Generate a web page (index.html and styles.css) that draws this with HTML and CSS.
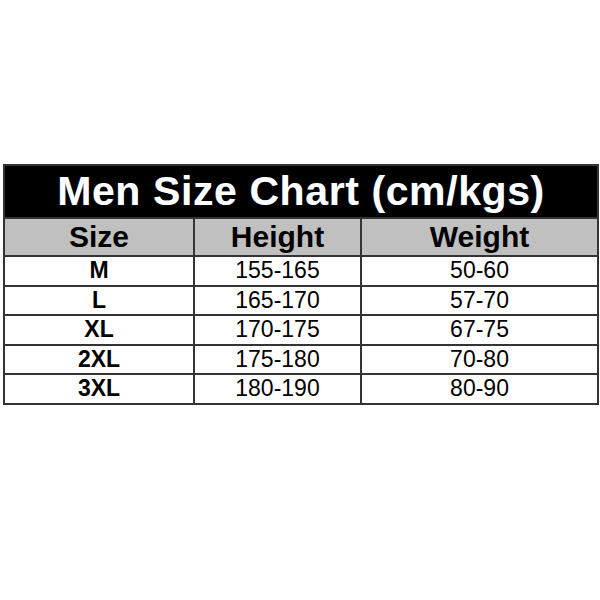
FILE: index.html
```html
<!DOCTYPE html>
<html>
<head>
<meta charset="utf-8">
<link rel="stylesheet" href="styles.css">
</head>
<body>
<div class="page">
  <table class="chart">
    <colgroup>
      <col class="c1"><col class="c2"><col class="c3">
    </colgroup>
    <thead>
      <tr class="title-row"><th colspan="3">Men Size Chart (cm/kgs)</th></tr>
      <tr class="head-row"><th>Size</th><th>Height</th><th>Weight</th></tr>
    </thead>
    <tbody>
      <tr><td class="sz">M</td><td>155-165</td><td>50-60</td></tr>
      <tr><td class="sz">L</td><td>165-170</td><td>57-70</td></tr>
      <tr><td class="sz">XL</td><td>170-175</td><td>67-75</td></tr>
      <tr><td class="sz">2XL</td><td>175-180</td><td>70-80</td></tr>
      <tr><td class="sz">3XL</td><td>180-190</td><td>80-90</td></tr>
    </tbody>
  </table>
</div>
</body>
</html>
```
FILE: styles.css
```css
html, body {
  margin: 0;
  padding: 0;
  background: #ffffff;
}
body {
  width: 600px;
  height: 600px;
  font-family: "Liberation Sans", Arial, sans-serif;
}
.page {
  padding: 164px 3px 0 3px;
}
.chart {
  width: 594px;
  border-collapse: collapse;
  table-layout: fixed;
  border: 2px solid #2e2e2e;
}
.c1 { width: 190px; }
.c2 { width: 167px; }
.c3 { width: 237px; }
.chart th, .chart td {
  border: 2px solid #333333;
  padding: 0;
  text-align: center;
  vertical-align: middle;
  color: #000000;
}
.title-row th {
  background: #000000;
  color: #ffffff;
  height: 51px;
  font-size: 41px;
  font-weight: bold;
  letter-spacing: 0.6px;
  text-shadow: 0 0 1px #1c3a66;
}
.head-row th {
  background: #c0c0c0;
  height: 36px;
  font-size: 30px;
  font-weight: bold;
}
.chart td {
  height: 27.5px;
  font-size: 23px;
  font-weight: normal;
}
.chart td.sz {
  font-size: 23px;
  font-weight: bold;
}
```
